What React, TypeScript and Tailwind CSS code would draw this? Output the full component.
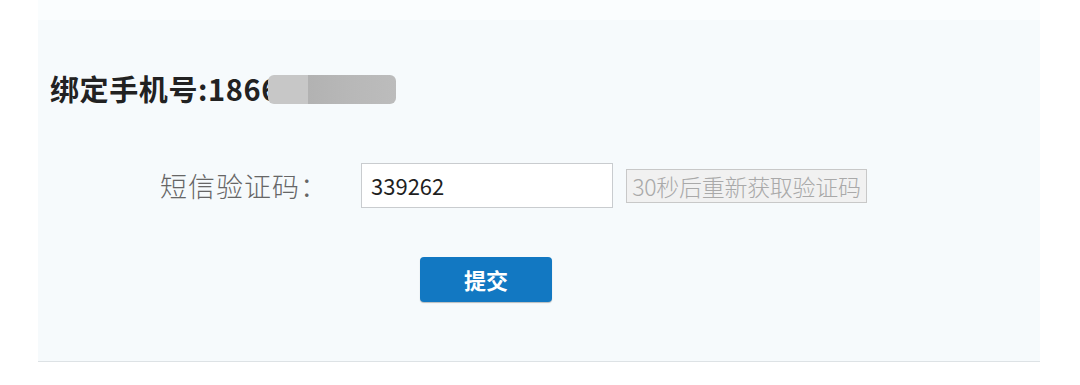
export default function App() {
  return (
    <div className="w-[1080px] h-[385px] bg-white overflow-hidden" style={{ fontFamily: '"Noto Sans CJK SC", "Noto Sans", sans-serif' }}>
      <div className="ml-[38px] w-[1002px] h-[362px] bg-[#f6fafc] border-b border-[#dde2e5] flex flex-col">
        <div className="h-[20px] bg-[#fafdfe]" />
        {/* bound phone */}
        <div className="mt-[50px] pl-[12px] flex items-center h-[36px]">
          <span className="text-[29px] leading-[36px] font-bold text-[#222] tracking-[0.6px]">绑定手机号:1866</span>
          <span className="ml-[-11px] mt-[2px] flex w-[128px] h-[29px] rounded-[6px] overflow-hidden blur-[0.6px]">
            <span className="w-[40px] bg-[#c7c7c7]" />
            <span className="flex-1 bg-[linear-gradient(90deg,#b2b2b2,#b8b8b8,#bcbcbc)]" />
          </span>
        </div>
        {/* sms code */}
        <div className="mt-[57px] flex items-center">
          <label className="ml-[122px] w-[201px] text-[27px] leading-[34px] tracking-[1px] text-[#666] font-light">短信验证码：</label>
          <div className="w-[252px] h-[45px] bg-white border border-[#c9cccf] flex items-center pl-[9px]">
            <span className="text-[22px] text-[#1f1f1f]">339262</span>
          </div>
          <button className="ml-[13px] w-[241px] h-[34px] bg-[#f1f1f1] border border-[#c8c8c8] text-[#a9a9a9] text-[23px] leading-[32px] tracking-[-0.3px] font-light flex items-center justify-center">
            30秒后重新获取验证码
          </button>
        </div>
        {/* submit */}
        <button className="mt-[49px] ml-[382px] w-[132px] h-[45px] bg-[#1278c2] rounded-[4px] text-white text-[22px] font-semibold flex items-center justify-center shadow-[0_1px_1px_rgba(0,0,0,0.25)]">
          提交
        </button>
      </div>
    </div>
  );
}
